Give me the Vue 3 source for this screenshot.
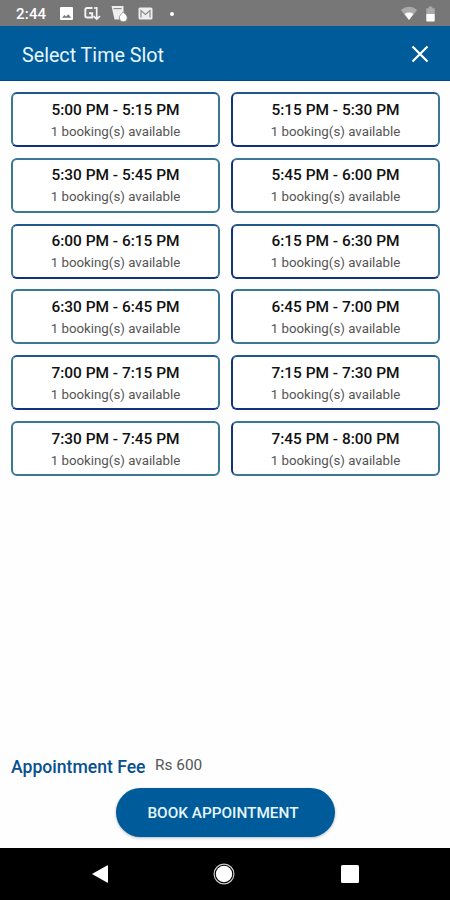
<script setup>
const slots = [
  '5:00 PM - 5:15 PM', '5:15 PM - 5:30 PM',
  '5:30 PM - 5:45 PM', '5:45 PM - 6:00 PM',
  '6:00 PM - 6:15 PM', '6:15 PM - 6:30 PM',
  '6:30 PM - 6:45 PM', '6:45 PM - 7:00 PM',
  '7:00 PM - 7:15 PM', '7:15 PM - 7:30 PM',
  '7:30 PM - 7:45 PM', '7:45 PM - 8:00 PM',
]
</script>

<template>
  <div class="screen">
    <div class="status">
      <span class="clock">2:44</span>
      <svg class="photo" width="13" height="13" viewBox="0 0 13 13">
        <rect width="13" height="13" rx="1" fill="#fff" />
        <path d="M2 10.7 4.4 8 6 9.4 8.4 7.3 11.2 10.7Z" fill="#777" />
      </svg>
      <svg class="gdown" width="17" height="15" viewBox="0 0 17 15">
        <path d="M8.5 2H3.2Q1.3 2 1.3 4V9.7Q1.3 11.5 3.2 11.5H8.2V7.2H5" fill="none" stroke="#f4f4f4" stroke-width="1.9" />
        <path d="M12.7 1V12.5M10 2H13M9.5 10.2 12.7 13.2 16 10.2" fill="none" stroke="#f4f4f4" stroke-width="1.7" />
      </svg>
      <svg class="news" width="17" height="17" viewBox="0 0 17 17">
        <path d="M.5 1H12.5V9L8 14.5H3.5Z" fill="#eee" />
        <path d="M2.5 3.6h8" stroke="#858585" stroke-width="1.1" />
        <path d="M12.3 7c1.3 1.6 4 3.4 4 5.8a4 4 0 0 1-8 0c0-2.4 2.7-4.2 4-5.8Z" fill="#fff" stroke="#777" stroke-width=".7" />
      </svg>
      <svg class="mail" width="15" height="13" viewBox="0 0 15 13">
        <rect x=".5" y=".5" width="14" height="12" rx="1.5" fill="#eee" />
        <path d="M3 10.5V3.5L7.5 7.5 12 3.5V10.5" fill="none" stroke="#8c8c8c" stroke-width="1.2" />
      </svg>
      <i class="dot"></i>
      <svg class="wifi" width="18" height="15" viewBox="0 0 18 15">
        <path d="M.8 4Q9-2.5 17.2 4L9 14Z" fill="#aaa" />
        <path d="M4.5 8Q9 5.2 13.5 8L9 14Z" fill="#fff" />
      </svg>
      <svg class="battery" width="9" height="16" viewBox="0 0 9 16">
        <path d="M.3 2.3h2.4V.5h3.6v1.8h2.4V8H.3Z" fill="#aaa" />
        <path d="M.3 8h8.4v6.7q0 .8-.8.8H1.1q-.8 0-.8-.8Z" fill="#fff" />
      </svg>
    </div>
    <header class="bar">
      <h1>Select Time Slot</h1>
      <svg width="18" height="18" viewBox="0 0 18 18">
        <path d="M1.5 1.5 16.5 16.5M16.5 1.5 1.5 16.5" stroke="#fff" stroke-width="2.2" />
      </svg>
    </header>
    <main class="slots">
      <div v-for="slot in slots" :key="slot" class="slot">
        <b>{{ slot }}</b>
        <span>1 booking(s) available</span>
      </div>
    </main>
    <div class="fee"><b>Appointment Fee</b><span>Rs 600</span></div>
    <button class="book">BOOK APPOINTMENT</button>
    <nav class="nav">
      <svg width="16" height="18" viewBox="0 0 16 18"><path d="M0 9 15 .5Q16 0 16 1V17Q16 18 15 17.5Z" fill="#fff" /></svg>
      <svg width="22" height="22" viewBox="0 0 22 22">
        <circle cx="11" cy="11" r="9.9" fill="none" stroke="#ccc" stroke-width="1.2" />
        <circle cx="11" cy="11" r="8.2" fill="#fff" />
      </svg>
      <svg width="18" height="18" viewBox="0 0 18 18"><rect width="18" height="18" rx="1.5" fill="#fff" /></svg>
    </nav>
  </div>
</template>

<style>
body { margin: 0; }
</style>

<style scoped>
.screen {
  width: 450px;
  height: 900px;
  display: flex;
  flex-direction: column;
  overflow: hidden;
  background: #fefefe;
  font-family: Roboto, "Liberation Sans", sans-serif;
}
svg { display: block; flex: none; }
.status {
  height: 26px;
  flex: none;
  box-sizing: border-box;
  padding: 1px 15px 0 16px;
  display: flex;
  align-items: center;
  background: #777;
  color: #fff;
}
.clock { width: 44px; font-size: 15px; font-weight: 500; line-height: 26px; letter-spacing: 0.2px; }
.gdown { margin-left: 11px; }
.news { margin-left: 10px; }
.mail { margin-left: 10px; }
.dot { width: 4px; height: 4px; margin-left: 17px; border-radius: 50%; background: #fff; }
.wifi { margin-left: auto; }
.battery { margin-left: 8px; }
.bar {
  height: 55px;
  flex: none;
  box-sizing: border-box;
  padding: 1px 21px 0 22px;
  display: flex;
  align-items: center;
  justify-content: space-between;
  background: #005b9b;
  border-bottom: 1px solid #004a8c;
  color: #e6f6fc;
}
h1 { margin: 0; padding-top: 4px; font-size: 19.7px; font-weight: 400; line-height: 28px; }
.slots {
  flex: none;
  display: grid;
  grid-template-columns: 1fr 1fr;
  gap: 10.8px 11px;
  padding: 11px 10px 0 11px;
}
.slot {
  height: 55px;
  box-sizing: border-box;
  padding-top: 5.6px;
  display: flex;
  flex-direction: column;
  align-items: center;
  border: 2px solid #3a7896;
  border-radius: 6px;
  background: #fff;
  white-space: nowrap;
}
.slot:nth-child(even) { border-left-color: #12317f; }
.slot:nth-child(4n + 1),
.slot:nth-child(4n + 2) { border-top-color: #20588c; border-bottom-color: #12317f; }
.slot b { font-size: 15.45px; font-weight: 500; line-height: 20px; color: #111; }
.slot span { margin-top: 3.1px; font-size: 13.3px; line-height: 18px; color: #555; }
.fee {
  margin-top: auto;
  display: flex;
  align-items: center;
  height: 24px;
  padding-left: 11px;
  white-space: nowrap;
}
.fee b { padding-top: 1px; font-size: 17.6px; font-weight: 500; color: #08508f; }
.fee span { margin: -2px 0 0 9.5px; font-size: 15.4px; color: #555; }
.book {
  flex: none;
  align-self: center;
  width: 219px;
  height: 49px;
  margin: 10px 0 11px;
  padding: 1px 4px 0 0;
  border: 0;
  border-radius: 25px;
  background: #005b9b;
  box-shadow: 0 1px 3px rgba(0, 40, 60, 0.3);
  color: #e6f6fc;
  font-family: inherit;
  font-size: 15.35px;
  font-weight: 500;
  white-space: nowrap;
}
.nav {
  height: 52px;
  flex: none;
  box-sizing: border-box;
  padding: 0 91.5px;
  display: flex;
  align-items: center;
  justify-content: space-between;
  background: #000;
}
</style>
